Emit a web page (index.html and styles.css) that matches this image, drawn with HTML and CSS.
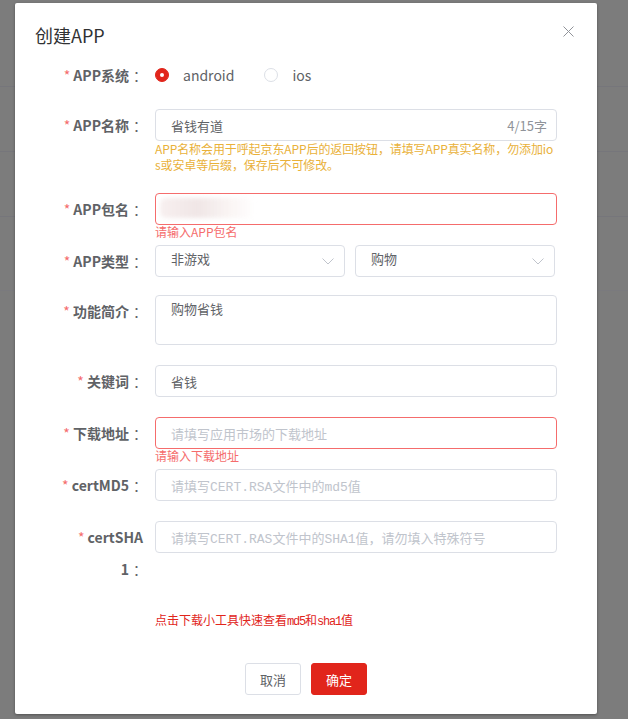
FILE: index.html
```html
<!DOCTYPE html>
<html lang="zh-CN">
<head>
<meta charset="utf-8">
<title>创建APP</title>
<link rel="stylesheet" href="styles.css">
</head>
<body>
<div class="page">
  <div class="bg-row first"></div>
  <div class="bg-row"></div>
  <div class="bg-row"></div>
  <div class="bg-row tall"></div>
</div>

<div class="modal">
  <div class="modal-hd">
    <span class="modal-title">创建APP</span>
    <span class="close" aria-label="关闭">
      <svg width="11" height="11" viewBox="0 0 11 11"><path d="M0.5 0.5 L10.5 10.5 M10.5 0.5 L0.5 10.5" stroke="#909399" stroke-width="1" fill="none"/></svg>
    </span>
  </div>

  <form class="form">
    <div class="item item-radio">
      <label class="label"><span class="req">*</span> APP系统<span class="colon">：</span></label>
      <div class="content radios">
        <span class="radio checked"><span class="dot"></span></span><span class="radio-text">android</span>
        <span class="radio second"></span><span class="radio-text">ios</span>
      </div>
    </div>

    <div class="item item-hint">
      <label class="label"><span class="req">*</span> APP名称<span class="colon">：</span></label>
      <div class="content">
        <div class="input-wrap">
          <input class="input input-count" type="text" value="省钱有道">
          <span class="count">4/15字</span>
        </div>
        <div class="hint">APP名称会用于呼起京东APP后的返回按钮，请填写APP真实名称，勿添加ios或安卓等后缀，保存后不可修改。</div>
      </div>
    </div>

    <div class="item item-error">
      <label class="label"><span class="req">*</span> APP包名<span class="colon">：</span></label>
      <div class="content">
        <div class="input-wrap is-error"><span class="blur"></span></div>
        <div class="error">请输入APP包名</div>
      </div>
    </div>

    <div class="item item-select">
      <label class="label"><span class="req">*</span> APP类型<span class="colon">：</span></label>
      <div class="content selects">
        <div class="select sel-1">
          <span class="sel-text">非游戏</span>
          <svg class="chev" width="12" height="7" viewBox="0 0 12 7"><path d="M0.5 0.5 L6 6 L11.5 0.5" stroke="#c0c4cc" stroke-width="1" fill="none"/></svg>
        </div>
        <div class="select sel-2">
          <span class="sel-text">购物</span>
          <svg class="chev" width="12" height="7" viewBox="0 0 12 7"><path d="M0.5 0.5 L6 6 L11.5 0.5" stroke="#c0c4cc" stroke-width="1" fill="none"/></svg>
        </div>
      </div>
    </div>

    <div class="item">
      <label class="label"><span class="req">*</span> 功能简介<span class="colon">：</span></label>
      <div class="content">
        <textarea class="textarea">购物省钱</textarea>
      </div>
    </div>

    <div class="item">
      <label class="label"><span class="req">*</span> 关键词<span class="colon">：</span></label>
      <div class="content">
        <input class="input" type="text" value="省钱">
      </div>
    </div>

    <div class="item item-error">
      <label class="label"><span class="req">*</span> 下载地址<span class="colon">：</span></label>
      <div class="content">
        <input class="input is-error" type="text" placeholder="请填写应用市场的下载地址">
        <div class="error">请输入下载地址</div>
      </div>
    </div>

    <div class="item">
      <label class="label"><span class="req">*</span> certMD5<span class="colon">：</span></label>
      <div class="content">
        <input class="input mono-ph" type="text" placeholder="请填写CERT.RSA文件中的md5值">
      </div>
    </div>

    <div class="item item-last">
      <label class="label wrap"><span class="req">*</span> certSHA<br>1<span class="colon">：</span></label>
      <div class="content">
        <input class="input mono-ph" type="text" placeholder="请填写CERT.RAS文件中的SHA1值，请勿填入特殊符号">
      </div>
    </div>

    <div class="tool-link">点击下载小工具快速查看<span class="lat">md5</span>和<span class="lat">sha1</span>值</div>
  </form>

  <div class="modal-ft">
    <button class="btn btn-default" type="button">取消</button>
    <button class="btn btn-primary" type="button">确定</button>
  </div>
</div>
</body>
</html>
```

FILE: styles.css
```css
* { box-sizing: border-box; }

html, body {
  margin: 0;
  padding: 0;
}

body {
  width: 628px;
  height: 719px;
  overflow: hidden;
  background: #7c7c7c;
  font-family: "Noto Sans CJK SC", "Noto Sans", sans-serif;
  position: relative;
  text-spacing-trim: space-all;
}

.page {
  display: flex;
  flex-direction: column;
}

.bg-row {
  height: 65px;
  border-bottom: 1px solid #76767b;
}
.bg-row.first { height: 87px; }
.bg-row.tall { height: 74px; border-bottom-color: #7a7a7e; }

.modal {
  position: absolute;
  left: 15px;
  top: 3px;
  width: 582px;
  height: 711px;
  background: #fff;
  border-radius: 2px;
  box-shadow: 0 1px 3px rgba(0, 0, 0, 0.35);
  display: flex;
  flex-direction: column;
}

.modal-hd {
  height: 56px;
  padding: 20px 23px 0 20px;
  display: flex;
  justify-content: space-between;
  align-items: flex-start;
}

.modal-title {
  font-size: 18px;
  line-height: 24px;
  color: #303133;
}

.close {
  display: block;
  width: 11px;
  height: 11px;
  margin-top: 3px;
}
.close svg { display: block; }

.form {
  padding: 0 40px 0 20px;
  margin: 0;
}

.item {
  display: flex;
  margin-bottom: 20px;
}
.item-radio { margin-bottom: 18px; }
.item-select { margin-bottom: 18px; }
.item-error { margin-bottom: 6px; }
.item-last { margin-bottom: 23px; }

.label {
  width: 120px;
  flex: none;
  padding-right: 12px;
  text-align: right;
  font-size: 14px;
  line-height: 32px;
  font-weight: bold;
  color: #606266;
}
.label.wrap {
  padding-left: 20px;
}

.colon {
  display: inline-block;
  width: 14px;
  text-align: left;
  padding-left: 4px;
  font-weight: normal;
}

.req {
  color: #f56c6c;
  font-weight: normal;
}

.content {
  width: 402px;
  flex: none;
}

.radios {
  display: flex;
  align-items: center;
  height: 32px;
}

.radio {
  width: 14px;
  height: 14px;
  border-radius: 50%;
  border: 1px solid #dcdfe6;
  background: #fff;
  display: flex;
  align-items: center;
  justify-content: center;
  flex: none;
}
.radio.checked {
  background: #e1251b;
  border-color: #e1251b;
}
.radio .dot {
  width: 4px;
  height: 4px;
  border-radius: 50%;
  background: #fff;
}
.radio.second { margin-left: 30px; }

.radio-text {
  margin-left: 14px;
  font-size: 14px;
  color: #606266;
  line-height: 20px;
}

.input-wrap {
  position: relative;
  display: flex;
  align-items: center;
  height: 32px;
  border: 1px solid #dcdfe6;
  border-radius: 4px;
  background: #fff;
  padding: 0 9px 0 15px;
}
.input-wrap.is-error { border-color: #f56c6c; padding-left: 4px; }

.input {
  display: block;
  width: 100%;
  height: 32px;
  border: 1px solid #dcdfe6;
  border-radius: 4px;
  padding: 0 15px;
  font-family: "Noto Sans CJK SC", sans-serif;
  font-size: 13px;
  color: #606266;
  background: #fff;
  outline: none;
}
.input.is-error { border-color: #f56c6c; }

.input::placeholder {
  color: #c0c4cc;
  font-family: "Liberation Mono", "Noto Sans CJK SC", monospace;
  font-size: 13px;
}

.input-count {
  border: none;
  height: 30px;
  padding: 0;
  flex: 1;
  width: auto;
  min-width: 0;
}

.count {
  font-size: 13px;
  color: #909399;
  flex: none;
}

.blur {
  display: inline-block;
  width: 95px;
  height: 20px;
  margin-top: -2px;
  border-radius: 6px;
  background: linear-gradient(90deg, rgba(240, 224, 224, 0.5), rgba(236, 224, 224, 0.8) 40%, rgba(246, 236, 234, 0.5) 75%, rgba(255, 255, 255, 0));
  filter: blur(2px);
}

.hint {
  font-size: 12px;
  line-height: 16px;
  color: #e9b13a;
  word-break: break-all;
  letter-spacing: -0.1px;
}

.error {
  font-size: 12px;
  line-height: 14px;
  color: #f56c6c;
}

.selects {
  display: flex;
  gap: 10px;
}

.select {
  display: flex;
  align-items: center;
  justify-content: space-between;
  height: 32px;
  border: 1px solid #dcdfe6;
  border-radius: 4px;
  padding: 0 10px 0 15px;
}
.sel-1 { width: 190px; }
.sel-2 { width: 200px; }

.sel-text {
  font-size: 13px;
  line-height: 20px;
  margin-top: -4px;
  color: #606266;
}

.chev { display: block; }

.textarea {
  display: block;
  width: 100%;
  height: 50px;
  border: 1px solid #dcdfe6;
  border-radius: 4px;
  padding: 3px 15px;
  font-family: "Noto Sans CJK SC", sans-serif;
  font-size: 13px;
  line-height: 20px;
  color: #606266;
  resize: none;
  outline: none;
}

.tool-link {
  margin-left: 120px;
  font-family: "Noto Sans CJK SC", sans-serif;
  font-size: 12px;
  line-height: 24px;
  color: #e1251b;
}

.tool-link .lat {
  font-family: "Liberation Mono", monospace;
  letter-spacing: -1.2px;
}

.modal-ft {
  display: flex;
  justify-content: center;
  gap: 10px;
  margin-top: 29px;
}

.btn {
  width: 56px;
  height: 32px;
  border-radius: 3px;
  font-family: "Noto Sans CJK SC", sans-serif;
  font-size: 13px;
  padding: 0;
  cursor: pointer;
}

.btn-default {
  background: #fff;
  border: 1px solid #dcdfe6;
  color: #606266;
}

.btn-primary {
  background: #e1251b;
  border: 1px solid #e1251b;
  color: #fff;
}
```
